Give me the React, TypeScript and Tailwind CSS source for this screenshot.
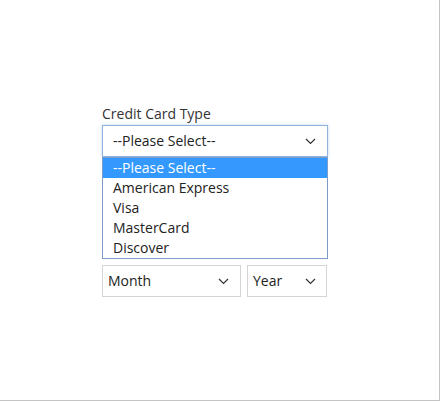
import React from "react";

const cardTypes = ["--Please Select--", "American Express", "Visa", "MasterCard", "Discover"];

function Chevron() {
  return (
    <svg width="11" height="7" viewBox="0 0 11 7" className="shrink-0">
      <path d="M1 1l4.5 4.5L10 1" fill="none" stroke="#333" strokeWidth="1.2" />
    </svg>
  );
}

export default function App() {
  return (
    <div
      className="w-[440px] h-[401px] bg-white border-r border-b border-[#c4c4c4] text-[14px] text-[#333]"
      style={{ fontFamily: '"Open Sans", "Liberation Sans", sans-serif' }}
    >
      <div className="pt-[104px] pl-[102px] w-[328px]">
        <label className="block leading-[20px] mb-[1px]">Credit Card Type</label>
        <div className="h-[32px] flex items-center justify-between pl-[10px] pr-[11px] border border-[#8fb3dc] shadow-[0_0_3px_rgba(80,140,210,0.35)] bg-white text-[#222]">
          <span className="leading-[20px]">--Please Select--</span>
          <Chevron />
        </div>
        <ul className="border border-[#7f9ccb] bg-white text-[#222]">
          {cardTypes.map((t, i) => (
            <li
              key={t}
              className={
                i === 0
                  ? "h-[20px] leading-[20px] pl-[10px] bg-[#3399ff] text-white"
                  : "h-[20px] leading-[20px] pl-[10px]"
              }
            >
              {t}
            </li>
          ))}
        </ul>
        <div className="flex gap-[6px] mt-[6px]">
          <div className="w-[139px] h-[32px] flex items-center justify-between pl-[5px] pr-[11px] border border-[#d4d4d4] text-[#222]">
            <span className="leading-[20px]">Month</span>
            <Chevron />
          </div>
          <div className="w-[80px] h-[32px] flex items-center justify-between pl-[5px] pr-[10px] border border-[#d4d4d4] text-[#222]">
            <span className="leading-[20px]">Year</span>
            <Chevron />
          </div>
        </div>
      </div>
    </div>
  );
}
